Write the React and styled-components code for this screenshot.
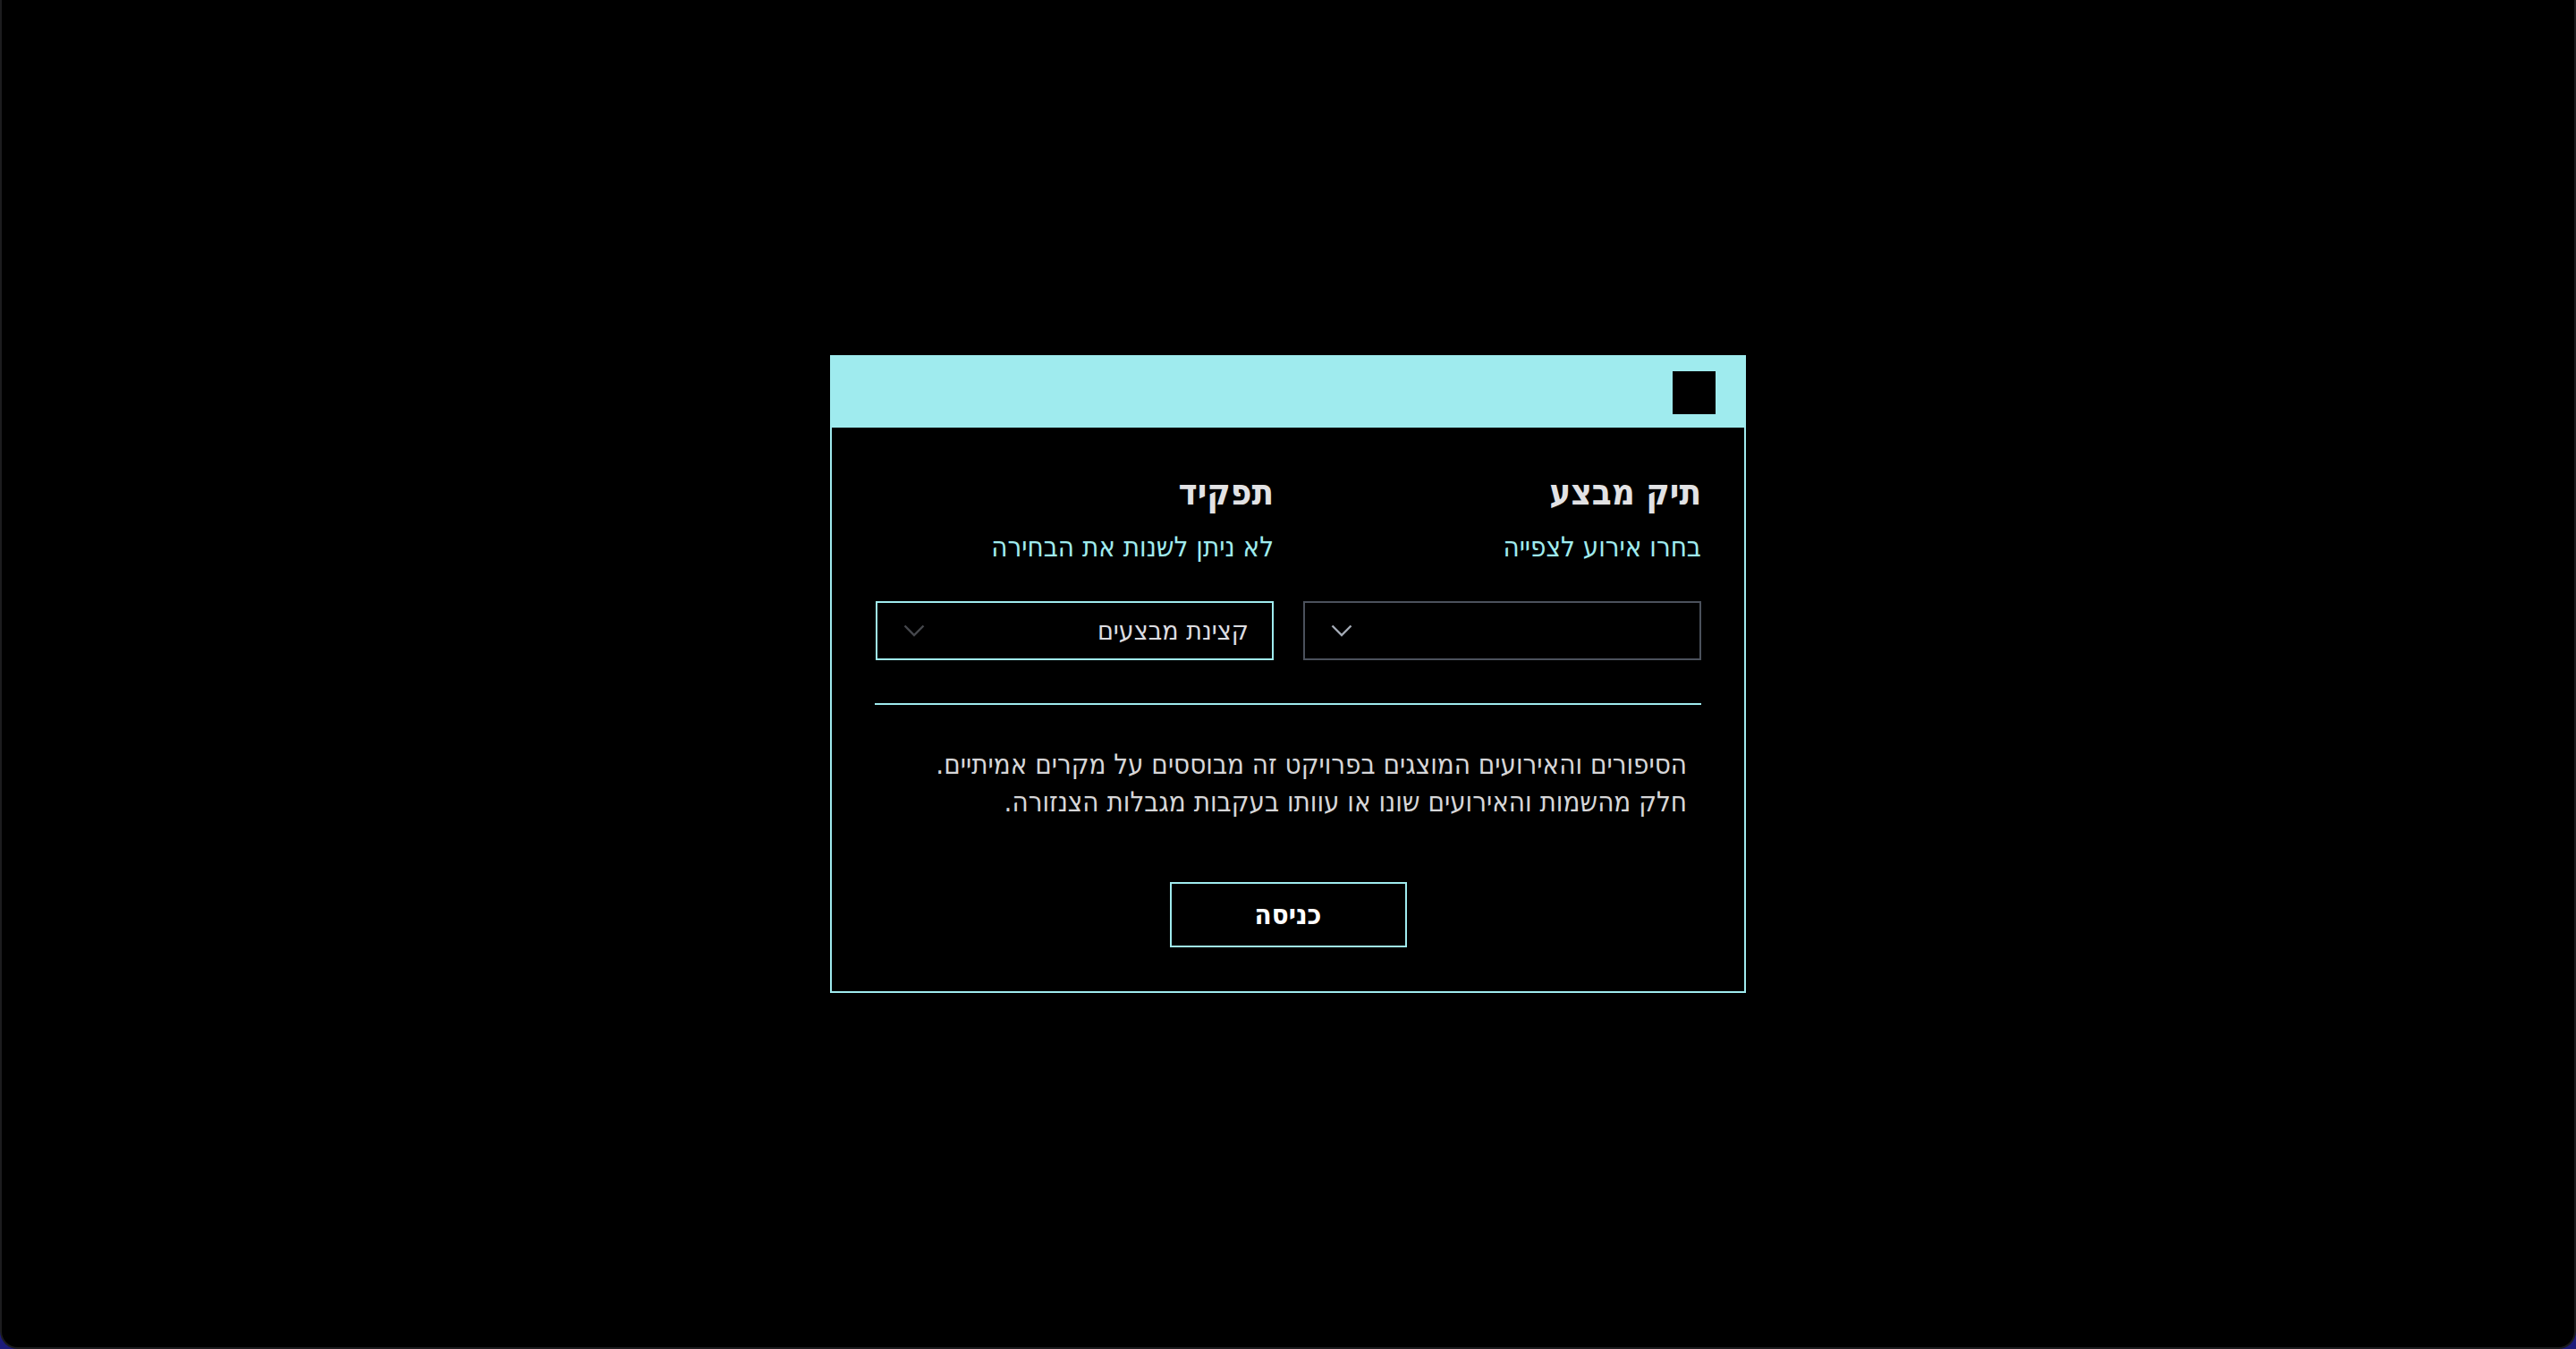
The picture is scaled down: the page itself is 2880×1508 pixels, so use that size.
import React from "react";
import styled, { createGlobalStyle } from "styled-components";

const Global = createGlobalStyle`
  html, body { margin: 0; padding: 0; background: #1d1b7a; }
  body { font-family: "DejaVu Sans Condensed", "DejaVu Sans", "Liberation Sans", sans-serif; }
  * { box-sizing: border-box; }
`;

const Frame = styled.div`
  height: 100vh;
  background: #000;
  border: 2px solid #1c1c1e;
  border-top: none;
  border-radius: 0 0 20px 20px;
  display: flex;
  align-items: center;
  justify-content: center;
`;

const Dialog = styled.div`
  width: 1024px;
  background: #000;
  border: 2px solid #9febee;
  direction: rtl;
  display: flex;
  flex-direction: column;
`;

const Header = styled.div`
  height: 79px;
  background: #9febee;
  display: flex;
  align-items: center;
  padding: 2px 32px 0;
`;

const CloseBox = styled.button`
  width: 48px;
  height: 48px;
  background: #000;
  border: none;
  padding: 0;
  cursor: pointer;
`;

const Body = styled.div`
  padding: 48px 48px 49px;
  display: flex;
  flex-direction: column;
`;

const Columns = styled.div`
  display: grid;
  grid-template-columns: 445px 445px;
  column-gap: 33px;
`;

const Field = styled.div`
  display: flex;
  flex-direction: column;
`;

const Title = styled.h2`
  margin: 0;
  font-size: 40px;
  line-height: 48px;
  font-weight: 700;
  color: #e2e2e4;
`;

const Subtitle = styled.div`
  margin-top: 17px;
  font-size: 31px;
  line-height: 40px;
  color: #9febee;
`;

const Select = styled.div`
  margin-top: 41px;
  height: 66px;
  border: 2px solid ${(p) => (p.$active ? "#9febee" : "#4b515c")};
  display: flex;
  align-items: center;
  justify-content: space-between;
  padding: 0 26px 0 29px;
  color: #dcdce0;
  font-size: 30px;
`;

const Chevron = ({ color }) => (
  <svg width="24" height="14" viewBox="0 0 24 14" fill="none">
    <path d="M1.5 1.5 L12 12 L22.5 1.5" stroke={color} strokeWidth="2.4" />
  </svg>
);

const Divider = styled.hr`
  margin: 48px 0 0;
  border: none;
  height: 2px;
  background: #9febee;
`;

const Notice = styled.p`
  margin: 45px 16px 0 0;
  font-size: 31px;
  line-height: 42px;
  color: #d6d6d8;
`;

const EnterButton = styled.button`
  align-self: center;
  margin-top: 69px;
  width: 265px;
  height: 73px;
  background: #000;
  border: 2px solid #9febee;
  color: #fff;
  font-family: inherit;
  font-size: 31px;
  font-weight: 700;
  cursor: pointer;
`;

export default function App() {
  return (
    <>
      <Global />
      <Frame>
        <Dialog>
          <Header>
            <CloseBox aria-label="סגור" />
          </Header>
          <Body>
            <Columns>
              <Field>
                <Title>תיק מבצע</Title>
                <Subtitle>בחרו אירוע לצפייה</Subtitle>
                <Select>
                  <span />
                  <Chevron color="#a3aab5" />
                </Select>
              </Field>
              <Field>
                <Title>תפקיד</Title>
                <Subtitle>לא ניתן לשנות את הבחירה</Subtitle>
                <Select $active>
                  <span>קצינת מבצעים</span>
                  <Chevron color="#45474c" />
                </Select>
              </Field>
            </Columns>
            <Divider />
            <Notice>
              הסיפורים והאירועים המוצגים בפרויקט זה מבוססים על מקרים אמיתיים.
              <br />
              חלק מהשמות והאירועים שונו או עוותו בעקבות מגבלות הצנזורה.
            </Notice>
            <EnterButton>כניסה</EnterButton>
          </Body>
        </Dialog>
      </Frame>
    </>
  );
}
